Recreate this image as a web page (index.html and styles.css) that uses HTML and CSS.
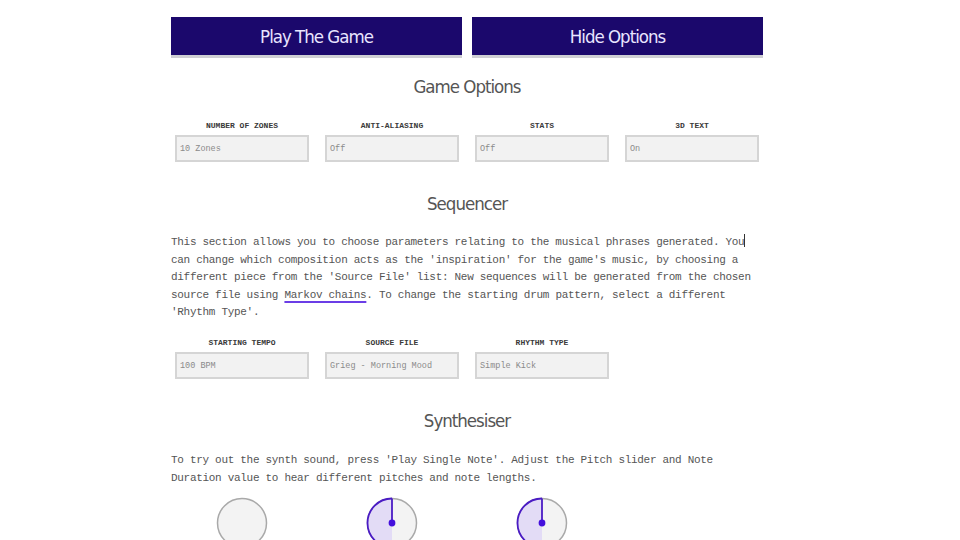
FILE: index.html
```html
<!DOCTYPE html>
<html>
<head>
<meta charset="utf-8">
<link rel="stylesheet" href="styles.css">
</head>
<body>
<div class="page">
  <div class="actions">
    <button class="btn">Play The Game</button>
    <button class="btn">Hide Options</button>
  </div>

  <h2 class="heading h-game">Game Options</h2>
  <div class="fields">
    <div class="field"><label>Number of Zones</label><div class="input">10 Zones</div></div>
    <div class="field"><label>Anti-Aliasing</label><div class="input">Off</div></div>
    <div class="field"><label>Stats</label><div class="input">Off</div></div>
    <div class="field"><label>3D Text</label><div class="input">On</div></div>
  </div>

  <h2 class="heading h-seq">Sequencer</h2>
  <p class="text t-seq">This section allows you to choose parameters relating to the musical phrases generated. You<span class="caret"></span> can change which composition acts as the 'inspiration' for the game's music, by choosing a different piece from the 'Source File' list: New sequences will be generated from the chosen source file using <a class="link">Markov chains</a>. To change the starting drum pattern, select a different 'Rhythm Type'.</p>
  <div class="fields f-seq">
    <div class="field"><label>Starting Tempo</label><div class="input">100 BPM</div></div>
    <div class="field"><label>Source File</label><div class="input">Grieg - Morning Mood</div></div>
    <div class="field"><label>Rhythm Type</label><div class="input">Simple Kick</div></div>
  </div>

  <h2 class="heading h-syn">Synthesiser</h2>
  <p class="text t-syn">To try out the synth sound, press 'Play Single Note'. Adjust the Pitch slider and Note Duration value to hear different pitches and note lengths.</p>
  <div class="knobs">
    <div class="knob">
      <svg width="52" height="52" viewBox="0 0 52 52"><circle cx="26" cy="26" r="24.5" fill="#f3f3f3" stroke="#a9a9a9" stroke-width="1.5"/></svg>
    </div>
    <div class="knob">
      <svg width="52" height="52" viewBox="0 0 52 52"><circle cx="26" cy="26" r="24.5" fill="#f3f3f3" stroke="#a9a9a9" stroke-width="1.5"/><path d="M26 26 L26 1.5 A24.5 24.5 0 0 0 26 50.5 Z" fill="#e3dcf6"/><path d="M26 1.5 A24.5 24.5 0 0 0 26 50.5" fill="none" stroke="#4a1bc4" stroke-width="1.8"/><path d="M26 26 L26 1.5" stroke="#4a1bc4" stroke-width="1.8"/><circle cx="26" cy="26" r="3.4" fill="#4410dc"/></svg>
    </div>
    <div class="knob">
      <svg width="52" height="52" viewBox="0 0 52 52"><circle cx="26" cy="26" r="24.5" fill="#f3f3f3" stroke="#a9a9a9" stroke-width="1.5"/><path d="M26 26 L26 1.5 A24.5 24.5 0 0 0 26 50.5 Z" fill="#e3dcf6"/><path d="M26 1.5 A24.5 24.5 0 0 0 26 50.5" fill="none" stroke="#4a1bc4" stroke-width="1.8"/><path d="M26 26 L26 1.5" stroke="#4a1bc4" stroke-width="1.8"/><circle cx="26" cy="26" r="3.4" fill="#4410dc"/></svg>
    </div>
  </div>
</div>
</body>
</html>
```
FILE: styles.css
```css
html, body {
  margin: 0;
  padding: 0;
  background: #ffffff;
}
.page {
  width: 592px;
  margin-left: 171px;
  padding-top: 17px;
}
.actions {
  display: flex;
  gap: 10px;
}
.btn {
  flex: 1;
  height: 38px;
  border: none;
  margin: 0;
  padding: 0;
  background: #1b086c;
  color: #e9e5ff;
  font-family: "DejaVu Sans", sans-serif;
  font-stretch: condensed;
  font-size: 18.5px;
  letter-spacing: -1px;
  box-shadow: 0 3px 0 #cfcfd4;
}
.heading {
  margin: 0;
  text-align: center;
  font-family: "DejaVu Sans", sans-serif;
  font-stretch: condensed;
  font-weight: normal;
  font-size: 18.5px;
  letter-spacing: -1px;
  line-height: 24px;
  color: #555555;
}
.h-game { margin-top: 20px; }
.h-seq { margin-top: 30px; }
.h-syn { margin-top: 30px; }
.fields {
  display: grid;
  grid-template-columns: repeat(4, 134px);
  column-gap: 16px;
  padding-left: 4px;
  margin-top: 20px;
}
.f-seq { margin-top: 14px; }
.field {
  display: flex;
  flex-direction: column;
  gap: 3px;
}
.field label {
  text-align: center;
  font-family: "Liberation Mono", monospace;
  font-weight: bold;
  font-size: 8px;
  line-height: 13px;
  text-transform: uppercase;
  color: #3a3a3a;
}
.input {
  height: 23px;
  border: 2px solid #d5d5d5;
  background: #f2f2f2;
  font-family: "Liberation Mono", monospace;
  font-size: 8.5px;
  line-height: 24px;
  padding-left: 3px;
  color: #8a8a8a;
}
.text {
  margin: 18px 0 0 0;
  font-family: "Liberation Mono", monospace;
  font-size: 11px;
  letter-spacing: -0.3px;
  line-height: 17.6px;
  color: #555555;
}
.t-syn { margin-top: 19px; }
.caret {
  display: inline-block;
  width: 1px;
  height: 13px;
  background: #333;
  vertical-align: -2px;
}
.link {
  color: #555555;
  text-decoration: underline;
  text-decoration-color: #6b3ee6;
  text-decoration-thickness: 2px;
  text-underline-offset: 3px;
}
.knobs {
  display: grid;
  grid-template-columns: repeat(3, 134px);
  column-gap: 16px;
  padding-left: 4px;
  margin-top: 10px;
}
.knob {
  display: flex;
  justify-content: center;
}
.knob svg {
  display: block;
}
```
